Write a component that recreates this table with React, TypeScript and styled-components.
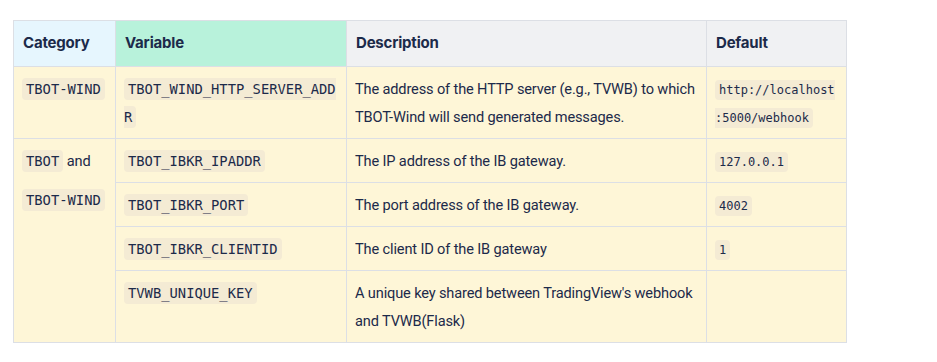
import styled, { createGlobalStyle } from "styled-components";

const GlobalStyle = createGlobalStyle`
  body {
    margin: 0;
    background: #ffffff;
    font-family: Roboto, Inter, "Noto Sans", sans-serif;
    color: #1c2a4a;
  }
`;

const Page = styled.div`
  padding: 20px 13px;
`;

const Table = styled.table`
  width: 833px;
  table-layout: fixed;
  border-collapse: collapse;
  font-size: 14.6px;
  line-height: 28px;
  letter-spacing: -0.15px;
`;

const HeadCell = styled.th<{ $bg: string }>`
  background: ${(p) => p.$bg};
  border: 1px solid #dcdfe5;
  padding: 8px 9px 9px;
  text-align: left;
  font-family: Inter, Roboto, sans-serif;
  font-size: 15px;
  font-weight: 700;
  letter-spacing: -0.2px;
  line-height: 28px;
`;

const Cell = styled.td`
  background: #fef6d7;
  border: 1px solid #dcdfe5;
  padding: 8px 8px 7px;
  vertical-align: top;
`;

const Code = styled.code<{ $small?: boolean }>`
  font-family: "DejaVu Sans Mono", "Liberation Mono", monospace;
  font-size: ${(p) => (p.$small ? "12px" : "13.8px")};
  line-height: 1;
  letter-spacing: 0;
  background: #f4ebd4;
  border-radius: 4px;
  padding: 3px 4px;
  word-break: break-all;
  line-break: anywhere;
`;

const Stack = styled.div`
  display: flex;
  flex-direction: column;
  gap: 11px;
`;

type Row = {
  variable: string;
  description: string;
  default?: string;
};

const rows: Row[] = [
  {
    variable: "TBOT_IBKR_IPADDR",
    description: "The IP address of the IB gateway.",
    default: "127.0.0.1",
  },
  {
    variable: "TBOT_IBKR_PORT",
    description: "The port address of the IB gateway.",
    default: "4002",
  },
  {
    variable: "TBOT_IBKR_CLIENTID",
    description: "The client ID of the IB gateway",
    default: "1",
  },
  {
    variable: "TVWB_UNIQUE_KEY",
    description: "A unique key shared between TradingView's webhook and TVWB(Flask)",
  },
];

export default function App() {
  return (
    <>
      <GlobalStyle />
      <Page>
        <Table>
          <colgroup>
            <col style={{ width: 102 }} />
            <col style={{ width: 231 }} />
            <col style={{ width: 360 }} />
            <col style={{ width: 140 }} />
          </colgroup>
          <thead>
            <tr>
              <HeadCell $bg="#e6f6fe">Category</HeadCell>
              <HeadCell $bg="#b8f2db">Variable</HeadCell>
              <HeadCell $bg="#f0f1f3">Description</HeadCell>
              <HeadCell $bg="#f0f1f3">Default</HeadCell>
            </tr>
          </thead>
          <tbody>
            <tr>
              <Cell>
                <Code>TBOT-WIND</Code>
              </Cell>
              <Cell>
                <Code>TBOT_WIND_HTTP_SERVER_ADDR</Code>
              </Cell>
              <Cell>
                The address of the HTTP server (e.g., TVWB) to which TBOT-Wind will send
                generated messages.
              </Cell>
              <Cell>
                <Code $small>http://localhost:5000/webhook</Code>
              </Cell>
            </tr>
            {rows.map((row, index) => (
              <tr key={row.variable}>
                {index === 0 && (
                  <Cell rowSpan={rows.length}>
                    <Stack>
                      <div>
                        <Code>TBOT</Code> and
                      </div>
                      <div>
                        <Code>TBOT-WIND</Code>
                      </div>
                    </Stack>
                  </Cell>
                )}
                <Cell>
                  <Code>{row.variable}</Code>
                </Cell>
                <Cell>{row.description}</Cell>
                <Cell>{row.default && <Code $small>{row.default}</Code>}</Cell>
              </tr>
            ))}
          </tbody>
        </Table>
      </Page>
    </>
  );
}
